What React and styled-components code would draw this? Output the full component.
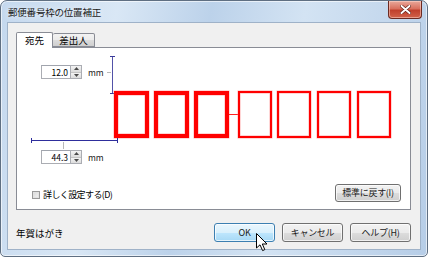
import React from 'react';
import styled, { createGlobalStyle } from 'styled-components';

const GlobalStyle = createGlobalStyle`
  html, body {
    margin: 0;
    padding: 0;
    background: #ffffff;
  }
  body {
    font-family: "Noto Sans CJK JP", "Noto Sans", sans-serif;
    font-size: 9px;
    color: #000;
  }
`;

const Window = styled.div`
  width: 428px;
  height: 257px;
  box-sizing: border-box;
  border: 1px solid #5f6f82;
  border-radius: 7px 7px 5px 5px;
  background: linear-gradient(100deg, #c4d8ee 0%, #d9e7f5 25%, #bcd2ea 45%, #d3e3f3 65%, #b6cde7 100%);
  padding: 0 6px 6px;
  display: flex;
  flex-direction: column;
  box-shadow: inset 0 0 0 1px rgba(255, 255, 255, 0.6);
`;

const TitleBar = styled.div`
  height: 21px;
  display: flex;
  align-items: flex-start;
  justify-content: space-between;
`;

const Title = styled.div`
  padding: 5px 0 0 1px;
  font-size: 9.5px;
  line-height: 12px;
  color: #1a1a1a;
  letter-spacing: -0.2px;
  text-shadow: 0 0 6px rgba(255, 255, 255, 0.9);
`;

const CloseButton = styled.div`
  width: 34px;
  height: 18px;
  margin-right: -1px;
  box-sizing: border-box;
  border: 1px solid #6b2a22;
  border-top: none;
  border-radius: 0 0 4px 4px;
  background: linear-gradient(to bottom, #e9a99b 0%, #d9705e 45%, #c0402c 55%, #d2624a 100%);
  display: flex;
  align-items: center;
  justify-content: center;
  box-shadow: inset 0 0 0 1px rgba(255, 220, 210, 0.5);
`;

const Client = styled.div`
  flex: 1;
  box-sizing: border-box;
  background: #f0f0f0;
  border: 1px solid #9fb2c8;
  padding: 9px 9px 0 8px;
  display: flex;
  flex-direction: column;
`;

const TabRow = styled.div`
  display: flex;
  align-items: flex-end;
  height: 15px;
  position: relative;
  z-index: 1;
`;

const Tab = styled.div`
  box-sizing: border-box;
  width: ${(p) => p.$w}px;
  height: ${(p) => (p.$active ? 16 : 14)}px;
  margin-bottom: ${(p) => (p.$active ? -1 : 0)}px;
  border: 1px solid #898c95;
  border-bottom: ${(p) => (p.$active ? 'none' : '1px solid #898c95')};
  border-left: ${(p) => (p.$first ? '1px solid #898c95' : 'none')};
  border-radius: 2px 2px 0 0;
  background: ${(p) =>
    p.$active ? '#ffffff' : 'linear-gradient(to bottom, #f3f3f3 0%, #ebebeb 50%, #dcdcdc 51%, #cfcfcf 100%)'};
  display: flex;
  align-items: center;
  justify-content: center;
  font-size: 9.5px;
  line-height: 12px;
  padding-bottom: ${(p) => (p.$active ? 1 : 0)}px;
`;

const Panel = styled.div`
  position: relative;
  height: 163px;
  box-sizing: border-box;
  background: #ffffff;
  border: 1px solid #898c95;
`;

const Spin = styled.div`
  position: absolute;
  left: ${(p) => p.$x}px;
  top: ${(p) => p.$y}px;
  display: flex;
  height: 14px;
`;

const SpinInput = styled.div`
  width: 29px;
  box-sizing: border-box;
  border: 1px solid #abadb3;
  border-top-color: #a0a4ad;
  border-right: none;
  background: #fff;
  font-size: 8.5px;
  line-height: 12px;
  text-align: right;
  padding-right: 2px;
`;

const SpinButtons = styled.div`
  width: 12px;
  box-sizing: border-box;
  border: 1px solid #abadb3;
  display: flex;
  flex-direction: column;
`;

const SpinHalf = styled.div`
  flex: 1;
  background: linear-gradient(to bottom, #f4f4f4, #dcdcdc);
  border-top: ${(p) => (p.$bottom ? '1px solid #c4c4c4' : 'none')};
  display: flex;
  align-items: center;
  justify-content: center;
`;

const Unit = styled.div`
  position: absolute;
  left: ${(p) => p.$x}px;
  top: ${(p) => p.$y}px;
  font-size: 8.5px;
  line-height: 10px;
  color: #222;
`;

const DimV = styled.div`
  position: absolute;
  left: ${(p) => p.$x}px;
  top: ${(p) => p.$y}px;
  width: 1px;
  height: ${(p) => p.$len}px;
  background: #5252a8;
  &::before, &::after {
    content: '';
    position: absolute;
    left: -2px;
    width: 5px;
    height: 1px;
    background: #3b3b9a;
  }
  &::before { top: 0; }
  &::after { bottom: 0; }
`;

const DimH = styled.div`
  position: absolute;
  left: ${(p) => p.$x}px;
  top: ${(p) => p.$y}px;
  height: 1px;
  width: ${(p) => p.$len}px;
  background: #2e2e9c;
  &::before, &::after {
    content: '';
    position: absolute;
    top: -2px;
    width: 1px;
    height: 5px;
    background: #2e2e9c;
  }
  &::before { left: 0; }
  &::after { right: 0; }
`;

const Leader = styled.div`
  position: absolute;
  left: ${(p) => p.$x}px;
  top: ${(p) => p.$y}px;
  width: ${(p) => p.$w}px;
  height: ${(p) => p.$h}px;
  background: #b8b8b8;
`;

const BoxRow = styled.div`
  position: absolute;
  left: 97px;
  top: 43px;
  display: flex;
  align-items: center;
`;

const CodeBox = styled.div`
  box-sizing: border-box;
  width: ${(p) => (p.$thick ? 35 : 34)}px;
  height: 47px;
  border: ${(p) => (p.$thick ? 4 : 2)}px solid #ff0000;
  margin-right: ${(p) => p.$gap}px;
  box-shadow: 0 0 0 0.5px rgba(255, 120, 120, 0.6), inset 0 0 0 0.5px rgba(255, 120, 120, 0.6);
`;

const Connector = styled.div`
  width: 9px;
  height: 1px;
  background: #ff2020;
`;

const CheckRow = styled.label`
  position: absolute;
  left: 15px;
  top: 141px;
  display: flex;
  align-items: center;
  gap: 3px;
  font-size: 9px;
  line-height: 12px;
  letter-spacing: -0.6px;
`;

const CheckBox = styled.span`
  width: 8px;
  height: 8px;
  box-sizing: border-box;
  border: 1px solid #9a9a9a;
  background: linear-gradient(135deg, #d8d8d8, #f4f4f4);
  box-shadow: inset 0 0 0 1px #e2e2e2;
`;

const Button = styled.div`
  box-sizing: border-box;
  width: ${(p) => p.$w}px;
  height: ${(p) => p.$h || 19}px;
  border: 1px solid ${(p) => (p.$hot ? '#3c7fb1' : '#707070')};
  border-radius: 3px;
  background: ${(p) =>
    p.$hot
      ? 'linear-gradient(to bottom, #eaf6fd 0%, #d9f0fc 50%, #bee6fd 51%, #a7d9f5 100%)'
      : 'linear-gradient(to bottom, #f2f2f2 0%, #ebebeb 50%, #dddddd 51%, #cfcfcf 100%)'};
  box-shadow: inset 0 0 0 1px rgba(255, 255, 255, 0.7);
  display: flex;
  align-items: center;
  justify-content: center;
  font-size: 9px;
  line-height: 12px;
  letter-spacing: -0.3px;
  color: #1a1a1a;
`;

const ResetButton = styled(Button)`
  position: absolute;
  right: 9px;
  top: 136px;
`;

const Footer = styled.div`
  margin-top: 13px;
  display: flex;
  align-items: center;
  gap: 7px;
  position: relative;
`;

const FooterLabel = styled.div`
  flex: 1;
  font-size: 9.5px;
  line-height: 12px;
  padding-top: 1px;
`;

const Cursor = styled.svg`
  position: absolute;
  left: 41px;
  top: 9px;
`;

const Arrow = ({ up }) => (
  <svg width="5" height="3" viewBox="0 0 5 3">
    <path d={up ? 'M0 3 L2.5 0 L5 3 Z' : 'M0 0 L2.5 3 L5 0 Z'} fill="#4a4a4a" />
  </svg>
);

const Spinner = ({ x, y, value }) => (
  <Spin $x={x} $y={y}>
    <SpinInput>{value}</SpinInput>
    <SpinButtons>
      <SpinHalf>
        <Arrow up />
      </SpinHalf>
      <SpinHalf $bottom>
        <Arrow />
      </SpinHalf>
    </SpinButtons>
  </Spin>
);

const boxes = [
  { thick: true, gap: 5 },
  { thick: true, gap: 5 },
  { thick: true, gap: 0 },
  { thick: false, gap: 5 },
  { thick: false, gap: 6 },
  { thick: false, gap: 6 },
  { thick: false, gap: 0 },
];

export default function App() {
  return (
    <>
      <GlobalStyle />
      <Window>
        <TitleBar>
          <Title>郵便番号枠の位置補正</Title>
          <CloseButton>
            <svg width="11" height="9" viewBox="0 0 11 9">
              <path d="M1.5 1 L9.5 8 M9.5 1 L1.5 8" stroke="#5a1a10" strokeWidth="3.2" strokeLinecap="round" />
              <path d="M1.5 1 L9.5 8 M9.5 1 L1.5 8" stroke="#ffffff" strokeWidth="2" strokeLinecap="round" />
            </svg>
          </CloseButton>
        </TitleBar>
        <Client>
          <TabRow>
            <Tab $active $first $w={37}>宛先</Tab>
            <Tab $w={42}>差出人</Tab>
          </TabRow>
          <Panel>
            <Spinner x={24} y={17} value="12.0" />
            <Unit $x={71} $y={19}>mm</Unit>
            <Leader $x={90} $y={24} $w={4} $h={1} />
            <DimV $x={95} $y={8} $len={38} />

            <BoxRow>
              {boxes.slice(0, 3).map((b, i) => (
                <CodeBox key={i} $thick={b.thick} $gap={b.gap} />
              ))}
              <Connector />
              {boxes.slice(3).map((b, i) => (
                <CodeBox key={i + 3} $thick={b.thick} $gap={b.gap} />
              ))}
            </BoxRow>

            <DimH $x={14} $y={92} $len={87} />
            <Leader $x={46} $y={94} $w={1} $h={7} />
            <Spinner x={24} y={102} value="44.3" />
            <Unit $x={71} $y={104}>mm</Unit>

            <CheckRow>
              <CheckBox />
              詳しく設定する(D)
            </CheckRow>
            <ResetButton $w={66} $h={18}>標準に戻す(I)</ResetButton>
          </Panel>
          <Footer>
            <FooterLabel>年賀はがき</FooterLabel>
            <Button $w={61} $hot style={{ position: 'relative' }}>
              OK
              <Cursor width="12" height="19" viewBox="0 0 12 19">
                <path
                  d="M0.5 0.5 L0.5 15 L4 11.8 L6.6 17.6 L8.8 16.6 L6.3 11 L11 11 Z"
                  fill="#ffffff"
                  stroke="#000000"
                  strokeWidth="1"
                  strokeLinejoin="round"
                />
              </Cursor>
            </Button>
            <Button $w={61}>キャンセル</Button>
            <Button $w={61}>ヘルプ(H)</Button>
          </Footer>
        </Client>
      </Window>
    </>
  );
}
